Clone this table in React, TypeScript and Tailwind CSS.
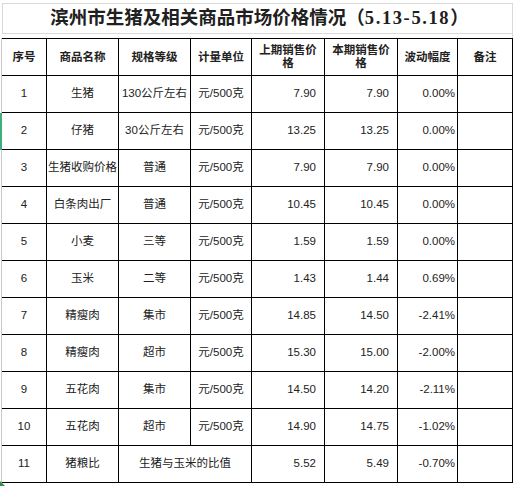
import React from 'react';

type Row = {
  no: string;
  name: string;
  spec: string;
  unit?: string;
  prev: string;
  cur: string;
  change: string;
};

const rows: Row[] = [
  { no: '1', name: '生猪', spec: '130公斤左右', unit: '元/500克', prev: '7.90', cur: '7.90', change: '0.00%' },
  { no: '2', name: '仔猪', spec: '30公斤左右', unit: '元/500克', prev: '13.25', cur: '13.25', change: '0.00%' },
  { no: '3', name: '生猪收购价格', spec: '普通', unit: '元/500克', prev: '7.90', cur: '7.90', change: '0.00%' },
  { no: '4', name: '白条肉出厂', spec: '普通', unit: '元/500克', prev: '10.45', cur: '10.45', change: '0.00%' },
  { no: '5', name: '小麦', spec: '三等', unit: '元/500克', prev: '1.59', cur: '1.59', change: '0.00%' },
  { no: '6', name: '玉米', spec: '二等', unit: '元/500克', prev: '1.43', cur: '1.44', change: '0.69%' },
  { no: '7', name: '精瘦肉', spec: '集市', unit: '元/500克', prev: '14.85', cur: '14.50', change: '-2.41%' },
  { no: '8', name: '精瘦肉', spec: '超市', unit: '元/500克', prev: '15.30', cur: '15.00', change: '-2.00%' },
  { no: '9', name: '五花肉', spec: '集市', unit: '元/500克', prev: '14.50', cur: '14.20', change: '-2.11%' },
  { no: '10', name: '五花肉', spec: '超市', unit: '元/500克', prev: '14.90', cur: '14.75', change: '-1.02%' },
  { no: '11', name: '猪粮比', spec: '生猪与玉米的比值', prev: '5.52', cur: '5.49', change: '-0.70%' },
];

const headers = ['序号', '商品名称', '规格等级', '计量单位', '上期销售价格', '本期销售价格', '波动幅度', '备注'];

const cell = 'h-[37px] border-r border-b border-black flex items-center';
const txt = 'text-[11.5px] whitespace-nowrap';

export default function App() {
  return (
    <div
      className="relative w-[514px] h-[486px] bg-white overflow-hidden text-[#222]"
      style={{ fontFamily: '"Liberation Sans", "Noto Sans CJK SC", sans-serif' }}
    >
      {/* title row */}
      <div className="h-[3px]" />
      <div className="ml-[2px] w-[511px] h-[30px] border-t border-l border-r border-[#d9d9d9] flex items-center justify-center">
        <span
          className="text-[18.5px] font-bold text-[#202020] pl-[4px]"
          style={{ fontFamily: '"Liberation Serif", "Noto Sans CJK SC", serif' }}
        >
          滨州市生猪及相关商品市场价格情况（<span className="tracking-[1.6px]">5.13-5.18</span>）
        </span>
      </div>
      <div className="ml-[2px] w-[511px] h-[5px] border-t border-r border-[#d9d9d9]" />

      {/* table */}
      <div className="ml-[1px] w-[512px] border-l border-[#c8c8c8]">
        <div className="grid grid-cols-[45px_72px_72px_61px_73px_73px_60px_55px] border-t border-black">
          {headers.map((h) => (
            <div key={h} className={`${cell} justify-center px-[6px] text-center text-[11.5px] leading-[13px] font-bold`}>
              {h}
            </div>
          ))}

          {rows.map((r) => (
            <React.Fragment key={r.no}>
              <div className={`${cell} justify-center ${txt}`}>{r.no}</div>
              <div className={`${cell} justify-center ${txt}`}>{r.name}</div>
              {r.unit ? (
                <>
                  <div className={`${cell} justify-center ${txt}`}>{r.spec}</div>
                  <div className={`${cell} justify-center ${txt}`}>{r.unit}</div>
                </>
              ) : (
                <div className={`${cell} col-span-2 justify-center ${txt}`}>{r.spec}</div>
              )}
              <div className={`${cell} justify-end pr-[8px] ${txt}`}>{r.prev}</div>
              <div className={`${cell} justify-end pr-[8px] ${txt}`}>{r.cur}</div>
              <div className={`${cell} justify-end pr-[2px] ${txt}`}>{r.change}</div>
              <div className={cell} />
            </React.Fragment>
          ))}
        </div>
      </div>

      {/* selection marker on row 2 */}
      <div className="absolute left-0 top-[113px] w-[2px] h-[37px] bg-[#3fae7f]" />
      <div className="absolute left-0 bottom-0 w-0 h-0 border-l-[5px] border-l-[#2f8f4e] border-t-[5px] border-t-transparent" />
    </div>
  );
}
